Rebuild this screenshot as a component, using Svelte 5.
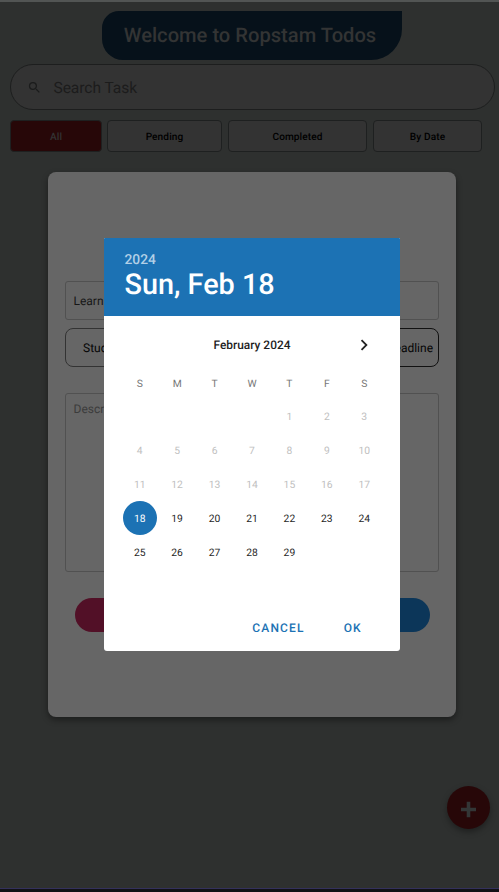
<script>
  const filters = [
    { label: 'All', width: 92 },
    { label: 'Pending', width: 115 },
    { label: 'Completed', width: 139 },
    { label: 'By Date', width: 109 }
  ];
  const weekdays = ['S', 'M', 'T', 'W', 'T', 'F', 'S'];
  const offset = 4;
  const cells = Array.from({ length: 35 }, (_, i) => {
    const day = i - offset + 1;
    return day > 0 && day <= 29 ? day : null;
  });
  let selected = $state(18);
  let activeFilter = $state('All');
</script>

<div class="screen">
  <header><h1>Welcome to Ropstam Todos</h1></header>
  <div class="search">
    <svg width="15" height="15" viewBox="0 0 24 24"><path fill="#1b1c1c" d="M15.5 14h-.79l-.28-.27A6.47 6.47 0 0 0 16 9.5 6.5 6.5 0 1 0 9.5 16c1.61 0 3.09-.59 4.23-1.57l.27.28v.79l5 4.99L20.49 19l-4.99-5zm-6 0C7.01 14 5 11.99 5 9.5S7.01 5 9.5 5 14 7.01 14 9.5 11.99 14 9.5 14z" /></svg>
    <span>Search Task</span>
  </div>
  <nav>
    {#each filters as f}
      <button class:active={activeFilter === f.label} style:width="{f.width}px" onclick={() => (activeFilter = f.label)}>{f.label}</button>
    {/each}
  </nav>
  <button class="fab" aria-label="Add task"><svg width="15" height="16" viewBox="0 0 15 16"><path d="M7.5 0V16M0 8H15" stroke="#333636" stroke-width="3.6" /></svg></button>
  <div class="bottom"></div>

  <section class="card">
    <div class="field name">Learn</div>
    <div class="selectors">
      <div class="select">Student</div>
      <div class="select deadline">Deadline</div>
    </div>
    <div class="field description">Description</div>
    <div class="actions"><i class="pink"></i><i class="blue"></i></div>
  </section>

  <section class="picker">
    <div class="heading">
      <div class="year">2024</div>
      <div class="date">Sun, Feb 18</div>
    </div>
    <div class="month">
      <span>February 2024</span>
      <svg width="22" height="22" viewBox="0 0 24 24"><path fill="#222" d="M8.59 16.59 13.17 12 8.59 7.41 10 6l6 6-6 6z" /></svg>
    </div>
    <div class="grid weekdays">
      {#each weekdays as d}<span>{d}</span>{/each}
    </div>
    <div class="grid days">
      {#each cells as day}
        <span class:past={day < 18} class:selected={day === selected}>{day ?? ''}</span>
      {/each}
    </div>
    <footer><span>CANCEL</span><span>OK</span></footer>
  </section>
</div>

<style>
  :global(body) { margin: 0; }
  .screen {
    position: relative;
    width: 499px;
    height: 892px;
    overflow: hidden;
    box-sizing: border-box;
    padding-top: 9px;
    border-top: 2px solid #525554;
    background: #2e302f;
    font-family: Roboto, "Liberation Sans", sans-serif;
    text-rendering: geometricPrecision;
  }
  .screen * { box-sizing: border-box; }
  button { font-family: inherit; padding: 0; text-rendering: inherit; }
  header {
    width: 300px;
    height: 49px;
    margin-left: 102px;
    background: #06111a;
    border-radius: 17px 0 31px 21px;
    display: flex;
    align-items: center;
    justify-content: center;
  }
  h1 { margin: 0 0 2px; padding-right: 4px; color: #333434; font-size: 20.15px; font-weight: 500; white-space: nowrap; }
  .search {
    width: 485px;
    height: 46px;
    margin: 4px 0 0 10px;
    border: 1px solid #1d1e1e;
    border-radius: 23px;
    background: #333;
    display: flex;
    align-items: center;
    color: #1c1c1c;
    font-size: 15.6px;
    padding: 1px 0 0 16px;
  }
  .search span { margin-left: 11.5px; padding-top: 1px; letter-spacing: -.08px; }
  nav { display: flex; gap: 6px; margin: 10px 0 0 10px; }
  nav button {
    height: 32px;
    border: 1px solid #1e2020;
    border-radius: 4px;
    background: #333;
    color: #000;
    font-size: 10.1px;
    font-weight: 500;
    letter-spacing: .1px;
    padding-top: 3px;
  }
  nav button:nth-child(2) { margin-left: -1px; }
  nav button.active { background: #270708; color: #333; }
  .card {
    position: absolute;
    left: 48px;
    top: 170px;
    width: 408px;
    height: 545px;
    padding: 109px 17px 0;
    border-radius: 8px;
    background: #666;
    box-shadow: 0 3px 6px rgba(0, 0, 0, .4);
    font-size: 12px;
  }
  .field { border: 1px solid #515151; border-radius: 3px; padding-left: 7.5px; }
  .name { height: 39px; line-height: 38px; color: #171717; }
  .selectors { display: flex; justify-content: space-between; margin-top: 8px; }
  .select {
    width: 170px;
    height: 39px;
    border: 1px solid #333;
    border-radius: 8px;
    line-height: 39px;
    padding-left: 17px;
    color: #050505;
  }
  .deadline { border-color: #111; text-align: right; padding: 0 5px 0 0; }
  .description { margin-top: 26px; height: 179px; line-height: 30px; color: #3c3c3c; }
  .actions { display: flex; justify-content: space-between; padding: 26px 9px 0; }
  .actions i { width: 150px; height: 34px; border-radius: 17px; }
  .actions .pink { margin-left: .5px; }
  .pink { background: #521027; }
  .blue { background: #0c3659; }
  .picker {
    position: absolute;
    left: 104px;
    top: 236px;
    width: 296px;
    height: 413px;
    border-radius: 1px 1px 3px 3px;
    overflow: hidden;
    background: #fff;
    color: #1f1f1f;
  }
  .heading { height: 78px; background: #1c72b4; color: #fff; padding: 14px 0 0 20.5px; }
  .year { font-size: 13.8px; line-height: 17px; font-weight: 500; color: #b2d0e7; }
  .date { font-size: 28.8px; line-height: 32px; font-weight: 500; white-space: nowrap; }
  .month { height: 58px; display: flex; align-items: center; justify-content: center; position: relative; font-size: 11.9px; font-weight: 500; }
  .month svg { position: absolute; right: 25px; top: 18px; }
  .grid { display: grid; grid-template-columns: repeat(7, 37.43px); margin-left: 17px; justify-items: center; }
  .grid span { display: grid; place-items: center; font-size: 10.3px; }
  .weekdays { height: 26px; margin-top: -4px; color: #777; }
  .weekdays span { height: 20px; padding-top: 7px; }
  .days { grid-auto-rows: 34px; margin-top: 1px; }
  .days span { width: 34px; height: 34px; padding-top: 1px; margin-top: 2px; }
  .days .past { color: #c0c0c0; }
  .days .selected { background: #1c72b4; color: #fff; border-radius: 50%; }
  footer { position: absolute; right: 37.5px; bottom: 14px; display: flex; gap: 39px; color: #1c72b4; font-size: 12px; line-height: 17px; font-weight: 500; letter-spacing: 1.15px; }
  footer span:last-child { margin-right: .7px; }
  .fab {
    position: absolute;
    left: 447px;
    top: 784px;
    width: 43px;
    height: 43px;
    border: 0;
    border-radius: 50%;
    background: #270708;
    box-shadow: 0 3px 6px rgba(0, 0, 0, .35);
    display: grid;
    place-items: center;
  }
  .fab svg { transform: translateY(1.5px); }
  .bottom { position: absolute; left: 0; right: 0; bottom: 0; height: 4px; background: #121116; border-top: 1px solid #34315c; }
</style>
